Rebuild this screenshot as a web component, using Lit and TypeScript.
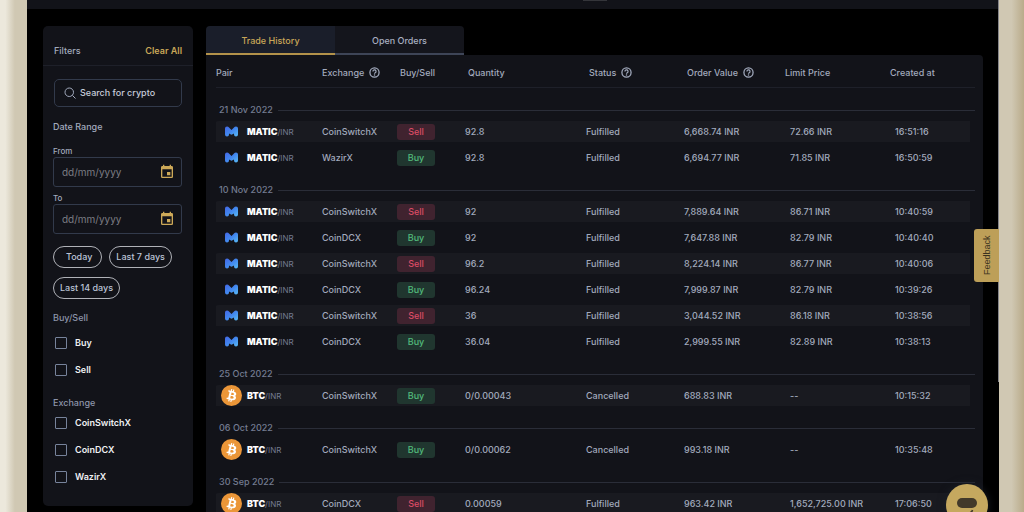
import { LitElement, html, css, nothing } from "lit";
import { customElement, state } from "lit/decorators.js";
import { classMap } from "lit/directives/class-map.js";

type Order = {
  coin: "MATIC" | "BTC";
  exchange: string;
  side: "Buy" | "Sell";
  quantity: string;
  status: string;
  value: string;
  limit: string;
  time: string;
  shaded: boolean;
};

const order = (
  coin: Order["coin"], exchange: string, side: Order["side"], quantity: string,
  status: string, value: string, limit: string, time: string, shaded: boolean,
): Order => ({ coin, exchange, side, quantity, status, value, limit, time, shaded });

const DAYS: { date: string; orders: Order[] }[] = [
  {
    date: "21 Nov 2022",
    orders: [
      order("MATIC", "CoinSwitchX", "Sell", "92.8", "Fulfilled", "6,668.74 INR", "72.66 INR", "16:51:16", true),
      order("MATIC", "WazirX", "Buy", "92.8", "Fulfilled", "6,694.77 INR", "71.85 INR", "16:50:59", false),
    ],
  },
  {
    date: "10 Nov 2022",
    orders: [
      order("MATIC", "CoinSwitchX", "Sell", "92", "Fulfilled", "7,889.64 INR", "86.71 INR", "10:40:59", true),
      order("MATIC", "CoinDCX", "Buy", "92", "Fulfilled", "7,647.88 INR", "82.79 INR", "10:40:40", false),
      order("MATIC", "CoinSwitchX", "Sell", "96.2", "Fulfilled", "8,224.14 INR", "86.77 INR", "10:40:06", true),
      order("MATIC", "CoinDCX", "Buy", "96.24", "Fulfilled", "7,999.87 INR", "82.79 INR", "10:39:26", false),
      order("MATIC", "CoinSwitchX", "Sell", "36", "Fulfilled", "3,044.52 INR", "86.18 INR", "10:38:56", true),
      order("MATIC", "CoinDCX", "Buy", "36.04", "Fulfilled", "2,999.55 INR", "82.89 INR", "10:38:13", false),
    ],
  },
  {
    date: "25 Oct 2022",
    orders: [order("BTC", "CoinSwitchX", "Buy", "0/0.00043", "Cancelled", "688.83 INR", "--", "10:15:32", true)],
  },
  {
    date: "06 Oct 2022",
    orders: [order("BTC", "CoinSwitchX", "Buy", "0/0.00062", "Cancelled", "993.18 INR", "--", "10:35:48", false)],
  },
  {
    date: "30 Sep 2022",
    orders: [order("BTC", "CoinDCX", "Sell", "0.00059", "Fulfilled", "963.42 INR", "1,652,725.00 INR", "17:06:50", true)],
  },
];

const COLUMNS = [
  { name: "Pair", cls: "pair", help: false },
  { name: "Exchange", cls: "exchange", help: true },
  { name: "Buy/Sell", cls: "side", help: false },
  { name: "Quantity", cls: "quantity", help: false },
  { name: "Status", cls: "status", help: true },
  { name: "Order Value", cls: "value", help: true },
  { name: "Limit Price", cls: "limit", help: false },
  { name: "Created at", cls: "created", help: false },
];

const helpIcon = html`<svg class="help" viewBox="0 0 24 24" aria-hidden="true">
  <circle cx="12" cy="12" r="10" fill="none" stroke="currentColor" stroke-width="2.8" />
  <path d="M8.600 9.600a3.400 3.400 0 1 1 5 2.900c-1.100.7-1.600 1.200-1.600 2.100" fill="none" stroke="currentColor" stroke-width="2.600" />
  <circle cx="12" cy="17.600" r="1.600" fill="currentColor" />
</svg>`;

const calendarIcon = html`<svg class="calendar" viewBox="0 0 24 24" aria-hidden="true">
  <path fill="currentColor" d="M19 3h-1V1h-2v2H8V1H6v2H5c-1.110 0-2 .9-2 2v14a2 2 0 0 0 2 2h14a2 2 0 0 0 2-2V5a2 2 0 0 0-2-2zm0 16H5V8h14v11zM17 12h-5v5h5v-5z" />
</svg>`;

const coinIcons = {
  MATIC: html`<svg class="matic" viewBox="0 0 26 22" aria-hidden="true">
    <defs>
      <linearGradient id="m" x1="0" y1="0" x2="1" y2="1">
        <stop offset="0" stop-color="#4468e6" />
        <stop offset=".5" stop-color="#4287ee" />
        <stop offset="1" stop-color="#5abcf6" />
      </linearGradient>
    </defs>
    <path fill="url(#m)" d="M0 5Q0 1 4 1Q6.500 1 8 3L13 8 18 3Q19.500 1 22 1Q26 1 26 5V17Q26 21 22 21Q18 21 18 17V15L13 17.500 8 15V17Q8 21 4 21Q0 21 0 17Z" />
  </svg>`,
  BTC: html`<svg class="btc" viewBox="0 0 32 32" aria-hidden="true">
    <circle cx="16" cy="16" r="16" fill="#eb9638" />
    <path fill="#fff" d="M23.189 14.02c.314-2.096-1.283-3.223-3.465-3.975l.708-2.84-1.728-.43-.69 2.765c-.454-.114-.92-.22-1.385-.326l.695-2.783L15.596 6l-.708 2.839c-.376-.086-.746-.17-1.104-.26l.002-.009-2.384-.595-.46 1.846s1.283.294 1.256.312c.7.175.826.638.805 1.006l-.806 3.235c.048.012.11.03.18.057l-.183-.045-1.13 4.532c-.086.212-.303.531-.793.41.018.025-1.256-.313-1.256-.313l-.858 1.978 2.25.561c.418.105.828.215 1.231.318l-.715 2.872 1.727.43.708-2.84c.472.127.93.245 1.378.357l-.706 2.828 1.728.43.715-2.866c2.948.558 5.164.333 6.097-2.333.752-2.146-.037-3.385-1.588-4.192 1.13-.26 1.98-1.003 2.207-2.538zm-3.95 5.538c-.533 2.147-4.148.986-5.32.695l.95-3.805c1.172.293 4.929.872 4.37 3.11zm.535-5.569c-.487 1.953-3.495.96-4.47.717l.86-3.45c.975.243 4.118.696 3.61 2.733z" />
  </svg>`,
};

@customElement("filter-panel")
class FilterPanel extends LitElement {
  static styles = css`
    :host { display: block; background: #121319; border-radius: 5px; color: #a2aabd; font: 500 9px/12px Inter, "Liberation Sans", sans-serif; }
    button, input { font: inherit; color: inherit; box-sizing: border-box; margin: 0; }
    .head { display: flex; justify-content: space-between; align-items: center; height: 40px; padding: 11px 11px 0; box-sizing: border-box; border-bottom: 1px solid #1e2029; }
    .clear { border: 0; padding: 0; background: none; color: #c8a657; font-weight: 600; }
    .body { display: flex; flex-direction: column; padding: 13px 11px 0 10px; }
    .search { display: flex; align-items: center; gap: 4px; height: 28px; box-sizing: border-box; margin-left: 1px; padding: 0 9px; border: 1px solid #323a4b; border-radius: 5px; }
    .search svg { width: 12px; height: 12px; flex: none; }
    .search input { width: 100%; min-width: 0; border: 0; padding: 0; background: none; outline: 0; }
    .search input::placeholder { color: #c6ccda; opacity: 1; }
    .title { margin: 14px 0 0; font: inherit; line-height: 12px; }
    .dates { margin-top: 12px; display: flex; flex-direction: column; gap: 5px; }
    .dates label { display: block; font-size: 8px; line-height: 12px; }
    .date { display: flex; align-items: center; height: 30px; box-sizing: border-box; padding: 0 6px 0 8px; border: 1px solid #323a4b; border-radius: 3px; }
    .date input { flex: 1; min-width: 0; border: 0; padding: 0; background: none; outline: 0; font-size: 10px; font-weight: 400; }
    .date input::placeholder { color: #7c7d84; opacity: 1; }
    .date button { border: 0; padding: 0; background: none; color: #cda958; display: flex; }
    .calendar { width: 16px; height: 16px; }
    .chips { display: flex; flex-wrap: wrap; gap: 9px 7px; margin-top: 12px; }
    .chips button { height: 22px; padding: 0 6px; border: 1px solid #b0b2b8; border-radius: 11px; background: none; color: #bcc4d6; }
    .chips .today { padding: 0 9px 0 12px; }
    fieldset { border: 0; margin: 0; padding: 0; min-width: 0; }
    legend { padding: 0; color: #8d95aa; }
    .side { margin-top: 13px; }
    .exchange { margin-top: 21px; }
    .checks { display: flex; flex-direction: column; gap: 15px; padding: 13px 0 0 2px; }
    .exchange .checks { padding-top: 8px; }
    .checks label { display: flex; align-items: center; gap: 8px; color: #eff0f3; font-weight: 600; }
    .checks input { appearance: none; width: 12px; height: 12px; border: 1px solid #77839b; border-radius: 1px; }
    .checks input:checked { background: #c2a255; }
  `;

  private dateField(id: string, name: string) {
    return html`<div>
      <label for=${id}>${name}</label>
      <div class="date">
        <input id=${id} type="text" placeholder="dd/mm/yyyy" />
        <button type="button" aria-label="Pick a date">${calendarIcon}</button>
      </div>
    </div>`;
  }

  private checks(cls: string, name: string, options: string[]) {
    return html`<fieldset class=${cls}>
      <legend>${name}</legend>
      <div class="checks">
        ${options.map((o) => html`<label><input type="checkbox" name=${cls} value=${o} />${o}</label>`)}
      </div>
    </fieldset>`;
  }

  render() {
    return html`
      <div class="head"><span>Filters</span><button class="clear" type="button">Clear All</button></div>
      <div class="body">
        <label class="search">
          <svg viewBox="0 0 24 24" fill="none" stroke="currentColor" stroke-width="2" aria-hidden="true">
            <circle cx="10.500" cy="10.500" r="8.500" /><path d="M16.800 16.800 23 23" />
          </svg>
          <input type="text" placeholder="Search for crypto" aria-label="Search for crypto" />
        </label>
        <h2 class="title">Date Range</h2>
        <div class="dates">${this.dateField("from", "From")}${this.dateField("to", "To")}</div>
        <div class="chips">
          <button class="today" type="button">Today</button>
          <button type="button">Last 7 days</button>
          <button type="button">Last 14 days</button>
        </div>
        ${this.checks("side", "Buy/Sell", ["Buy", "Sell"])}
        ${this.checks("exchange", "Exchange", ["CoinSwitchX", "CoinDCX", "WazirX"])}
      </div>
    `;
  }
}

@customElement("order-table")
class OrderTable extends LitElement {
  static styles = css`
    :host { display: block; padding: 0 8px 0 10px; background: #121319; border-radius: 0 4px 0 0; color: #a2aabd; font: 500 9px/12px Inter, "Liberation Sans", sans-serif; }
    table { width: 100%; table-layout: fixed; border-collapse: separate; border-spacing: 0; }
    th, td { padding: 0; box-sizing: border-box; text-align: left; font-weight: 500; white-space: nowrap; vertical-align: middle; }
    col.pair { width: 106px; }
    col.exchange { width: 75px; }
    col.side { width: 68px; }
    col.quantity { width: 121px; }
    col.status { width: 98px; }
    col.value { width: 101px; }
    col.limit { width: 105px; }
    col.created { width: 85px; }
    thead th { height: 33px; padding-top: 3px; border-bottom: 1px solid #1e2029; }
    .side, .quantity, .status, .value { padding-left: 3px; }
    .label { display: flex; align-items: center; gap: 5px; }
    .help { width: 11px; height: 11px; }
    .day th { height: 28px; padding: 10px 0 0 3px; color: #747c91; }
    thead + tbody .day th { height: 31px; padding-top: 13px; }
    .rule { display: flex; align-items: center; gap: 5px; }
    .rule::after { content: ""; flex: 1; height: 1px; background: #2a2d38; }
    td { height: 26px; border: 0 solid transparent; border-width: 2px 0 3px; background-clip: padding-box; }
    .shaded td { background-color: #191a20; }
    td:first-child { border-radius: 3px 0 0 3px; }
    td:last-child { border-right-width: 5px; }
    td.limit, td.created { padding-left: 5px; }
    .coin { display: flex; align-items: center; height: 21px; padding-left: 5px; }
    .badge { display: flex; justify-content: center; width: 21px; margin-right: 5px; }
    .matic { width: 13px; height: 11px; }
    .btc { width: 21px; height: 21px; }
    .name { display: flex; align-items: baseline; padding-top: 1px; }
    .name b { font-weight: 900; color: #fff; }
    .name small { font-size: 8px; font-weight: 400; color: #747c91; }
    .tag { display: block; width: 38px; line-height: 16px; border-radius: 3px; text-align: center; }
    .tag.buy { background: #20362f; color: #52bb7c; }
    .tag.sell { background: #40232f; color: #d94c65; }
  `;

  render() {
    return html`<table>
      <colgroup>${COLUMNS.map((c) => html`<col class=${c.cls} />`)}</colgroup>
      <thead>
        <tr>
          ${COLUMNS.map((c) => html`<th class=${c.cls} scope="col"><span class="label">${c.name}${c.help ? helpIcon : nothing}</span></th>`)}
        </tr>
      </thead>
      ${DAYS.map((day) => html`<tbody>
        <tr class="day"><th colspan="8" scope="rowgroup"><span class="rule">${day.date}</span></th></tr>
        ${day.orders.map((o) => html`<tr class=${classMap({ shaded: o.shaded })}>
          <td><span class="coin"><span class="badge">${coinIcons[o.coin]}</span><span class="name"><b>${o.coin}</b><small>/INR</small></span></span></td>
          <td>${o.exchange}</td>
          <td><span class="tag ${o.side.toLowerCase()}">${o.side}</span></td>
          <td>${o.quantity}</td>
          <td>${o.status}</td>
          <td>${o.value}</td>
          <td class="limit">${o.limit}</td>
          <td class="created">${o.time}</td>
        </tr>`)}
      </tbody>`)}
    </table>`;
  }
}

@customElement("app-root")
class AppRoot extends LitElement {
  static styles = css`
    :host { display: block; font: 500 9px/12px Inter, "Liberation Sans", sans-serif; }
    .frame { display: grid; grid-template-columns: 27px minmax(0, 1fr) 25px; height: 100vh; overflow: hidden; }
    .edge.left { background: linear-gradient(90deg, #ece8dc 0 20%, #d0c8b3 55%, #d0c8b3); }
    .edge.right { background: linear-gradient(90deg, #d0c8b3 0 50%, #b9ab8a 100%); }
    .screen { position: relative; overflow: hidden; background: #000; }
    .bar { display: flex; justify-content: center; height: 9px; background: #121319; }
    .bar span { width: 24px; height: 1px; margin-left: 163px; background: #34353a; }
    .page { display: grid; grid-template-columns: 150px minmax(0, 1fr); gap: 13px; align-items: start; padding: 17px 16px 0; }
    filter-panel { min-height: 480px; }
    .tabs { display: flex; }
    .tabs button { width: 129px; height: 29px; box-sizing: border-box; padding: 2px 0 0; border: 0; border-bottom: 2px solid #3e4557; background: #14151c; color: #a8afc0; font: inherit; }
    .tabs button:first-child { border-radius: 4px 0 0 0; }
    .tabs button:last-child { border-radius: 0 4px 0 0; }
    .tabs .active { background: #1a1e2a; border-color: #b3924a; color: #c8a657; }
    .scroll { position: absolute; top: 0; right: 0; width: 1px; height: 382px; background: #85858a; }
    .feedback { position: absolute; right: 0; top: 229px; width: 25px; height: 53px; padding: 0; border: 0; border-radius: 3px 0 0 3px; background: #bd9f58; color: #3a3220; font: 400 9px/12px "Liberation Sans", sans-serif; writing-mode: vertical-rl; }
    .feedback span { display: block; transform: rotate(180deg); text-align: center; }
    .chat { position: absolute; right: 11px; bottom: -14px; width: 42px; height: 42px; padding: 0; border: 0; border-radius: 50%; background: #c5a85f; box-shadow: 0 0 8px #1a1e26; }
    .chat svg { display: block; width: 42px; height: 42px; }
  `;

  @state() private tab = "Trade History";

  render() {
    return html`<div class="frame">
      <div class="edge left"></div>
      <div class="screen">
        <header class="bar"><span></span></header>
        <div class="page">
          <filter-panel></filter-panel>
          <main>
            <div class="tabs" role="tablist">
              ${["Trade History", "Open Orders"].map((t) => html`<button
                type="button" role="tab" aria-selected=${this.tab === t}
                class=${classMap({ active: this.tab === t })}
                @click=${() => { this.tab = t; }}>${t}</button>`)}
            </div>
            <order-table></order-table>
          </main>
        </div>
        <div class="scroll"></div>
        <button class="feedback" type="button"><span>Feedback</span></button>
        <button class="chat" type="button" aria-label="Open chat">
          <svg viewBox="0 0 42 42" aria-hidden="true">
            <rect x="11" y="14" width="20" height="10" rx="5" fill="#42392a" />
            <path d="M23 29q3-.5 3.500-3" fill="none" stroke="#42392a" stroke-width="1.500" />
          </svg>
        </button>
      </div>
      <div class="edge right"></div>
    </div>`;
  }
}
